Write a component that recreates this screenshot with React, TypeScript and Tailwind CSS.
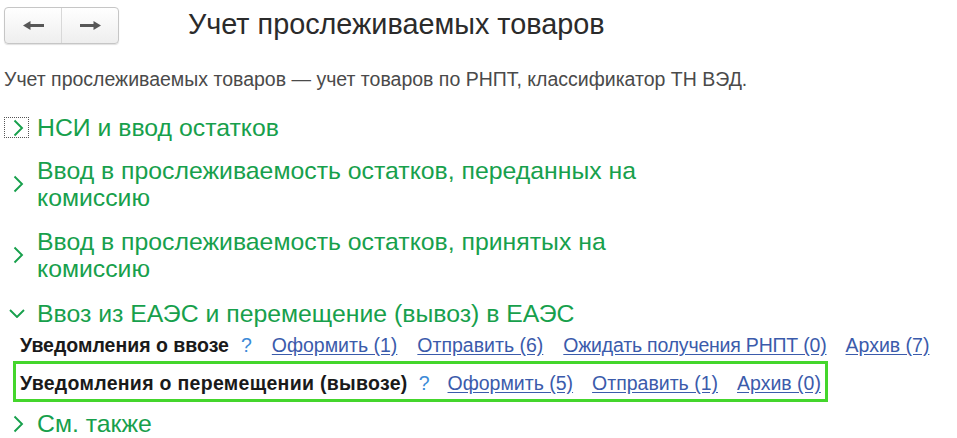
import type { ReactNode } from 'react';

const GREEN = 'text-[#17a04c]';

function ArrowLeft() {
  return (
    <svg width="21" height="9" viewBox="0 0 21 9">
      <path d="M0 4.5 L7.5 0 V3 H21 V6 H7.5 V9 Z" fill="#575757" />
    </svg>
  );
}

function ArrowRight() {
  return (
    <svg width="21" height="9" viewBox="0 0 21 9">
      <path d="M21 4.5 L13.5 0 V3 H0 V6 H13.5 V9 Z" fill="#575757" />
    </svg>
  );
}

function NavButtons() {
  return (
    <div className="flex h-[37px] w-[115px] rounded-[4px] border border-[#c6c6c6] bg-gradient-to-b from-white to-[#eeeeee] shadow-[0_1px_1px_rgba(0,0,0,0.12)]">
      <div className="flex w-[57px] items-center justify-center border-r border-[#d8d8d8]">
        <ArrowLeft />
      </div>
      <div className="flex flex-1 items-center justify-center">
        <ArrowRight />
      </div>
    </div>
  );
}

function ChevronRight() {
  return (
    <svg width="11" height="18" viewBox="0 0 11 18">
      <polyline points="1.5,1.5 9,9 1.5,16.5" fill="none" stroke="#17a04c" strokeWidth="1.9" />
    </svg>
  );
}

function ChevronDown() {
  return (
    <svg width="16" height="9" viewBox="0 0 16 9">
      <polyline points="1,1 8,8 15,1" fill="none" stroke="#17a04c" strokeWidth="1.9" />
    </svg>
  );
}

interface SectionProps {
  open?: boolean;
  focused?: boolean;
  className?: string;
  children: ReactNode;
}

function Section({ open = false, focused = false, className = '', children }: SectionProps) {
  return (
    <div className={`flex items-center ${className}`}>
      <div className="w-[37px] shrink-0 pl-[4px]">
        <div
          className={`flex h-[21px] w-[25px] items-center border border-dotted ${
            focused ? 'border-[#555]' : 'border-transparent'
          } ${open ? 'pl-[4px]' : 'pl-[8px]'}`}
        >
          {open ? <ChevronDown /> : <ChevronRight />}
        </div>
      </div>
      <div className={`text-[24.8px] leading-[27px] ${GREEN}`}>{children}</div>
    </div>
  );
}

function Link({ children }: { children: ReactNode }) {
  return <a className="cursor-pointer text-[#3b5bab] underline underline-offset-2">{children}</a>;
}

export default function App() {
  return (
    <div className="h-[438px] w-[957px] overflow-hidden bg-white font-['Liberation_Sans',Arial,sans-serif]">
      <div className="flex items-start pl-[4px] pt-[7px]">
        <NavButtons />
        <h1 className="ml-[69px] text-[28.8px] leading-[34px] text-[#2b2b2b]">
          Учет прослеживаемых товаров
        </h1>
      </div>

      <p className="mt-[24px] pl-[4px] text-[19.5px] leading-[22px] text-[#4a4a4a]">
        Учет прослеживаемых товаров — учет товаров по РНПТ, классификатор ТН ВЭД.
      </p>

      <Section focused className="mt-[24px]">
        НСИ и ввод остатков
      </Section>
      <Section className="mt-[16px]">
        Ввод в прослеживаемость остатков, переданных на
        <br />
        комиссию
      </Section>
      <Section className="mt-[17px]">
        Ввод в прослеживаемость остатков, принятых на
        <br />
        комиссию
      </Section>
      <Section open className="mt-[18px]">
        Ввоз из ЕАЭС и перемещение (вывоз) в ЕАЭС
      </Section>

      <div className="mt-[7px] flex items-baseline pl-[20px] text-[19.5px] leading-[22px] whitespace-nowrap">
        <b className="text-[#1a1a1a]">Уведомления о ввозе</b>
        <span className="ml-[12px] mr-[20px] text-[#3c8bd8]">?</span>
        <Link>Оформить (1)</Link>
        <span className="ml-[20px]">
          <Link>Отправить (6)</Link>
        </span>
        <span className="ml-[20px] tracking-[-0.2px]">
          <Link>Ожидать получения РНПТ (0)</Link>
        </span>
        <span className="ml-[19px]">
          <Link>Архив (7)</Link>
        </span>
      </div>

      <div className="ml-[13px] mt-[5px] w-[815px] border-[3px] border-[#44d62c] pb-[5px] pl-[4px] pt-[8px]">
        <div className="flex items-baseline text-[19.5px] leading-[22px] whitespace-nowrap">
          <b className="tracking-[0.3px] text-[#1a1a1a]">Уведомления о перемещении (вывозе)</b>
          <span className="ml-[11px] mr-[18px] text-[#3c8bd8]">?</span>
          <Link>Оформить (5)</Link>
          <span className="ml-[19px]">
            <Link>Отправить (1)</Link>
          </span>
          <span className="ml-[19px]">
            <Link>Архив (0)</Link>
          </span>
        </div>
      </div>

      <Section className="mt-[8px]">См. также</Section>
    </div>
  );
}
